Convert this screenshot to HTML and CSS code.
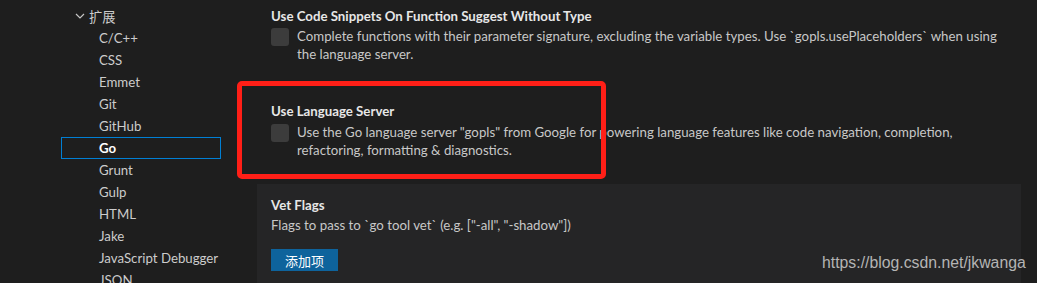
FILE: index.html
```html
<!DOCTYPE html>
<html lang="en">
<head>
    <meta charset="UTF-8">
    <title>Settings - Go</title>
    <link rel="stylesheet" href="styles.css">
</head>
<body>
    <div class="layout">
        <div class="toc">
            <div class="toc-group">
                <svg class="chevron" width="12" height="12" viewBox="0 0 12 12"><path d="M2 4 L6 8 L10 4" fill="none" stroke="#c5c5c5" stroke-width="1.2"/></svg>
                <span class="cjk">扩展</span>
            </div>
            <div class="toc-item">C/C++</div>
            <div class="toc-item">CSS</div>
            <div class="toc-item">Emmet</div>
            <div class="toc-item">Git</div>
            <div class="toc-item">GitHub</div>
            <div class="toc-item selected">Go</div>
            <div class="toc-item">Grunt</div>
            <div class="toc-item">Gulp</div>
            <div class="toc-item">HTML</div>
            <div class="toc-item">Jake</div>
            <div class="toc-item">JavaScript Debugger</div>
            <div class="toc-item">JSON</div>
        </div>
        <div class="settings">
            <div class="setting first">
                <div class="setting-title">Use Code Snippets On Function Suggest Without Type</div>
                <div class="setting-row">
                    <span class="checkbox"></span>
                    <div class="setting-desc">Complete functions with their parameter signature, excluding the variable types. Use `gopls.usePlaceholders` when using the language server.</div>
                </div>
            </div>
            <div class="setting highlight">
                <div class="setting-title">Use Language Server</div>
                <div class="setting-row">
                    <span class="checkbox"></span>
                    <div class="setting-desc">Use the Go language server "gopls" from Google for powering language features like code navigation, completion, refactoring, formatting &amp; diagnostics.</div>
                </div>
                <div class="red-box"></div>
            </div>
            <div class="setting focused">
                <div class="setting-title">Vet Flags</div>
                <div class="setting-desc">Flags to pass to `go tool vet` (e.g. ["-all", "-shadow"])</div>
                <button class="add-btn cjk">添加项</button>
            </div>
        </div>
    </div>
    <div class="watermark">https://blog.csdn.net/jkwanga</div>
</body>
</html>
```

FILE: styles.css
```css
body {
    margin: 0;
    background: #1e1e1e;
    color: #cccccc;
    font-family: Lato, "Noto Sans CJK SC", sans-serif;
    font-size: 13.25px;
    height: 283px;
    overflow: hidden;
}
.cjk {
    font-family: "Noto Sans CJK SC", sans-serif;
}
.layout {
    display: flex;
}
.toc {
    width: 160px;
    margin-left: 61px;
    padding-top: 5px;
    flex-shrink: 0;
}
.toc-group {
    height: 22px;
    display: flex;
    align-items: center;
    padding-left: 13px;
    gap: 3px;
    color: #cccccc;
}
.toc-item {
    height: 22px;
    line-height: 22px;
    padding-left: 38px;
    box-sizing: border-box;
    color: #cccccc;
}
.toc-item.selected {
    border: 1px solid #007fd4;
    line-height: 20px;
    padding-left: 37px;
    color: #ffffff;
    font-weight: bold;
}
.settings {
    margin-left: 36px;
    width: 764px;
    margin-top: -5px;
}
.setting {
    position: relative;
    padding: 12px 14px 18px;
}
.setting.first {
    padding-bottom: 27px;
}
.setting.highlight {
    padding-bottom: 25px;
}
.setting.highlight .setting-title {
    margin-top: -1px;
    margin-bottom: 3px;
}
.setting.focused {
    background: #252526;
    height: 120px;
}
.setting-title {
    color: #e7e7e7;
    font-weight: bold;
    line-height: 18px;
    margin-bottom: 2px;
}
.setting-row {
    display: flex;
    gap: 8px;
}
.checkbox {
    width: 18px;
    height: 18px;
    margin-top: 1px;
    border-radius: 3px;
    background: #3c3c3c;
    flex-shrink: 0;
}
.setting-desc {
    line-height: 18.3px;
    color: #c8c8c8;
}
.add-btn {
    margin-top: 15px;
    background: #0e639c;
    color: #ffffff;
    border: none;
    height: 22px;
    width: 67px;
    font-size: 13px;
    padding: 0;
}
.red-box {
    position: absolute;
    left: -20px;
    top: -10px;
    width: 359px;
    height: 88px;
    border: 5px solid #ff1f17;
    border-radius: 5px;
}
.watermark {
    position: absolute;
    left: 822px;
    top: 254px;
    font-family: "Liberation Sans", sans-serif;
    font-size: 15.8px;
    color: #b4b4b4;
}
```
